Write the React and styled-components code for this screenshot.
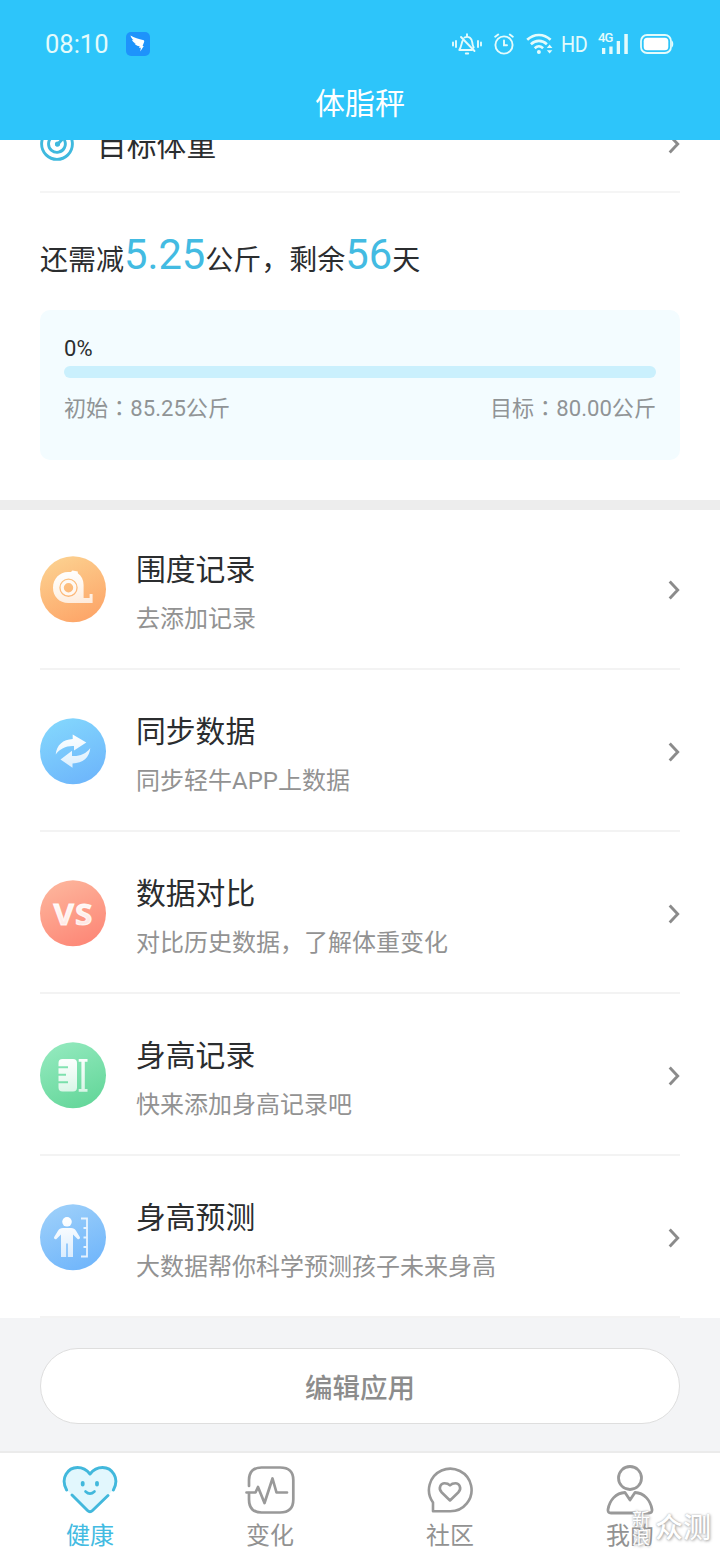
import React from 'react'
import styled, { createGlobalStyle } from 'styled-components'

const GlobalStyle = createGlobalStyle`
    *{
        box-sizing: border-box;
    }
    body{
        margin: 0;
        background: #ffffff;
        font-family: Roboto, 'Noto Sans CJK SC', sans-serif;
        color: #2b2d2f;
    }
    svg{
        display: block;
        flex-shrink: 0;
    }
`;

const entries = [
    { id: 'girth', title: '围度记录', text: '去添加记录', icon: GirthIcon },
    { id: 'sync', title: '同步数据', text: '同步轻牛APP上数据', icon: SyncIcon },
    { id: 'compare', title: '数据对比', text: '对比历史数据，了解体重变化', icon: CompareIcon },
    { id: 'height', title: '身高记录', text: '快来添加身高记录吧', icon: HeightIcon },
    { id: 'predict', title: '身高预测', text: '大数据帮你科学预测孩子未来身高', icon: PredictIcon },
]

const tabs = [
    { label: '健康', icon: HealthIcon, active: true },
    { label: '变化', icon: TrendIcon },
    { label: '社区', icon: CommunityIcon },
    { label: '我的', icon: MineIcon },
]

//status bar icons
function AppBadge() {
    return (
        <svg width="24" height="24" viewBox="0 0 24 24">
            <rect width="24" height="24" rx="5" fill="#1e93fb" />
            <path d="M4.500 3.500C8 5.800 13 7.200 17 8c1.200.3 1.500 1 1.100 2.100L16.600 14h1.200l-3.500 5.500.5-3.700h-1.900l.8-1.500c-2.600-.2-4.300-1.200-5.200-2.700l1.700.2C8 10.900 6.500 9.400 6 7.800l1.700.5C6 7 4.800 5.400 4.500 3.500Z" fill="#fff" />
        </svg>
    )
}

function MuteIcon() {
    return (
        <svg width="30" height="22" viewBox="0 0 30 22" fill="none" stroke="#e4fbfb" strokeWidth="1.900" strokeLinecap="round" strokeLinejoin="round">
            <path d="M1 9.500v3M4 8v6M26 8v6M29 9.500v3M15 1.200v1.500M10.500 8C9.500 10 9.500 13.500 7.300 17H20M12.500 4.500C17 2.500 20 5.500 20.300 9.500c.1 2 .5 3.500 1.400 5M9 4 22.500 18M13.800 20.500h2.400" />
        </svg>
    )
}

function AlarmIcon() {
    return (
        <svg width="20" height="22" viewBox="0 0 20 22" fill="none" stroke="#e4fbfb" strokeWidth="1.900" strokeLinecap="round">
            <circle cx="10" cy="12" r="8.600" />
            <path d="M10 7.500V12.300H13M1.200 3.700 4.200 1.500M18.800 3.700 15.800 1.500" />
        </svg>
    )
}

function WifiIcon() {
    return (
        <svg width="27" height="22" viewBox="0 0 27 22" fill="none" stroke="#e4fbfb" strokeWidth="2.600">
            <path d="M1.200 6.800C8 .3 17.800.3 24.600 6.800M4.900 11.200c4.700-4.400 11.300-4.400 16 0M8.700 15.200c2.600-2.400 5.800-2.400 8.400 0" />
            <circle cx="12.900" cy="19" r="2" fill="#e4fbfb" stroke="none" />
            <path d="m20.800 15 2.800-3.400 2.800 3.400ZM20.800 17.200l2.800 3.400 2.800-3.400Z" fill="#e4fbfb" stroke="none" />
        </svg>
    )
}

function SignalBars() {
    return (
        <svg width="26" height="20" viewBox="0 0 26 20" fill="#e4fbfb">
            <path d="M0 14h3.300v6H0zM7.300 12.500h3.300V20H7.300zM14.700 7H18v13h-3.300zM22.300 0h3.500v20h-3.500z" />
        </svg>
    )
}

function BatteryIcon() {
    return (
        <svg width="34" height="20" viewBox="0 0 34 20">
            <rect x="1" y="1" width="30" height="18" rx="6" fill="none" stroke="#e4fbfb" strokeWidth="1.800" />
            <rect x="3.700" y="3.700" width="24.600" height="12.600" rx="3.500" fill="#fff" />
            <path d="M32 6.500c1.700 1.500 1.700 5.500 0 7Z" fill="#e4fbfb" />
        </svg>
    )
}

function TargetIcon() {
    return (
        <svg width="34" height="34" viewBox="0 0 34 34" fill="none" stroke="#3fb9de" strokeLinecap="round">
            <circle cx="17" cy="17" r="15.400" strokeWidth="2.900" />
            <path d="M24.600 13.500a8.400 8.400 0 1 1-5.600-4.700" strokeWidth="2.900" />
            <path d="M17 18 23 11.500" strokeWidth="3" />
            <circle cx="17.500" cy="17" r="1.400" strokeWidth="2.400" />
        </svg>
    )
}

function Chevron() {
    return (
        <svg width="12" height="20" viewBox="0 0 12 20" fill="none" stroke="#8b8b8b" strokeWidth="2.900">
            <path d="m1.700 1.600 8 8.400-8 8.400" />
        </svg>
    )
}

//round icons of the list
function Disc({ id, from, to, children }) {
    return (
        <svg width="66" height="67" viewBox="0 0 66 67">
            <defs>
                <linearGradient id={`${id}-bg`} x1=".3" y1="0" x2=".75" y2="1">
                    <stop stopColor={from} />
                    <stop offset="1" stopColor={to} />
                </linearGradient>
                <linearGradient id={`${id}-fg`} gradientUnits="userSpaceOnUse" x1="30" y1="14" x2="34" y2="52">
                    <stop stopColor="#fff" />
                    <stop offset="1" stopColor="#fff" stopOpacity=".72" />
                </linearGradient>
            </defs>
            <circle cx="33" cy="33.300" r="33" fill={`url(#${id}-bg)`} />
            {children}
        </svg>
    )
}

function GirthIcon() {
    return (
        <Disc id="girth" from="#fcd08f" to="#fda467">
            <path fillRule="evenodd" d="M28 16h3l1.400-1.600 5.400 1v1.900c3.800 2.500 5.800 6.700 5.800 11.800V42h6v-4h3v9H28.500C19 47 13 40.300 13 31.700S19.500 16 28 16ZM28.500 22.500a9.200 9.200 0 1 0 0 18.400 9.200 9.200 0 0 0 0-18.400Z" fill="url(#girth-fg)" />
            <circle cx="28.500" cy="31.700" r="6.300" fill="none" stroke="#fff" strokeOpacity=".9" strokeWidth="3.200" />
        </Disc>
    )
}

function SyncIcon() {
    return (
        <Disc id="sync" from="#83d6fd" to="#6db5fb">
            <path d="M15.700 36.500C16.500 27 23 21.500 32.700 21V16.500L46.300 24.500 34 32.500V28C26.500 27.500 20 30.500 15.700 36.500Z" fill="url(#sync-fg)" />
            <path d="M50.300 30C49.500 39.500 43 45 32.500 45.500v4.200L20.500 41.500 32 32.700V38C39.500 38.500 46 36 50.300 30Z" fill="url(#sync-fg)" />
        </Disc>
    )
}

function CompareIcon() {
    return (
        <Disc id="compare" from="#fdb49b" to="#fd8676">
            <text x="33.500" y="45" textAnchor="middle" textLength="40" lengthAdjust="spacingAndGlyphs" fontFamily="'Noto Sans', 'Open Sans', sans-serif" fontWeight="700" fontSize="29" letterSpacing="1" fill="url(#compare-fg)" stroke="url(#compare-fg)" strokeWidth=".9">VS</text>
        </Disc>
    )
}

function HeightIcon() {
    return (
        <Disc id="height" from="#92e9bd" to="#63d699">
            <path d="M22.500 17H33a4 4 0 0 1 4 4v24.500a4 4 0 0 1-4 4H22.500a4 4 0 0 1-4-4v-4.300H28v-2H18.500v-5.500H26v-2H18.500v-5.500H28v-2h-9.500V21a4 4 0 0 1 4-4Z" fill="url(#height-fg)" />
            <path d="M38.700 17h8.800v2.700h-2.700V47h2.700v2.700h-8.800V47h2.700V19.700h-2.700Z" fill="url(#height-fg)" />
        </Disc>
    )
}

function PredictIcon() {
    return (
        <Disc id="predict" from="#9ccffa" to="#6fb5fb">
            <circle cx="27" cy="17.800" r="4.800" fill="url(#predict-fg)" />
            <path d="M23 24h8c2.500 0 3.800 1 5 2.800l3.800 6.200c.9 1.600-1.200 3-2.500 1.700L33 30.500V53h-5.200V39.500h-1.600V53H21V30.500l-4.300 4.200c-1.300 1.300-3.400-.1-2.500-1.700l3.800-6.200C19.200 25 20.500 24 23 24Z" fill="url(#predict-fg)" />
            <path d="M41 14.500h6v38h-6M43.500 24H47M43.500 33.500H47M43.500 43H47" fill="none" stroke="#fff" strokeOpacity=".8" strokeWidth="1.800" />
        </Disc>
    )
}

//tab bar icons
function HealthIcon() {
    return (
        <svg width="56" height="48" viewBox="0 0 56 48" fill="none" stroke="#42b8dc" strokeWidth="2.900" strokeLinecap="round" strokeLinejoin="round">
            <path d="M5 24C-2 12 6 1.500 15.500 1.500c5 0 9 2 12.500 6.500C31.500 3.500 35.500 1.500 40.500 1.500 50 1.500 58 12 51 24L30 45q-2 2-4 0Z" fill="#e2f7fd" stroke="none" />
            <path d="M4.600 24C-2 12 6 1.500 15.500 1.500c5 0 9 2 12.500 6.500C31.500 3.500 35.500 1.500 40.500 1.500 50 1.500 58 12 51.400 24M10 29 25.500 44.500q2.500 2.500 5 0L46 29.500" />
            <path d="M20.700 16.800v1.800M35 16.800v1.800" strokeWidth="3.800" />
            <path d="M23.500 25.500q4.500 4.200 9 0" strokeWidth="2.600" />
        </svg>
    )
}

function TrendIcon() {
    return (
        <svg width="50" height="48" viewBox="0 0 50 48" fill="none" stroke="#999" strokeWidth="2.700" strokeLinecap="round" strokeLinejoin="round">
            <path d="M4 20V14Q4 1.500 16.500 1.500H35Q48.300 1.500 48.300 14V33.500Q48.300 46.500 35 46.500H16.500Q4 46.500 4 33.500V27" />
            <path d="M1.500 26.500H10.500L13 21 19.500 37 27.500 12.500 31.500 26.500H42" />
        </svg>
    )
}

function CommunityIcon() {
    return (
        <svg width="46" height="46" viewBox="0 0 46 46" fill="none" stroke="#999" strokeWidth="2.600" strokeLinejoin="round">
            <path d="M6 44.300V35.500A21.300 21.300 0 1 1 23.300 44.300Z" />
            <path d="M23 33.500 14.800 25.500C10.500 21 14 16.300 17.500 16.300c2.300 0 4.200.7 5.500 2 1.300-1.300 3.200-2 5.500-2 3.500 0 7 4.700 2.700 9.200Z" />
        </svg>
    )
}

function MineIcon() {
    return (
        <svg width="48" height="50" viewBox="0 0 48 50" fill="none" stroke="#999" strokeWidth="2.800" strokeLinecap="round" strokeLinejoin="round">
            <circle cx="24" cy="13" r="11.500" />
            <path d="M28.500 48H5Q1.500 48 2 44.500C3.500 35 10 28 19 27.500L24 35 29 27.500C38 28 44.500 35 46 44.500Q46.500 48 43 48H36" />
        </svg>
    )
}

function Header() {
    return (
        <HeaderStyled>
            <StatusBar>
                <Clock>08:10</Clock>
                <AppBadge />
                <StatusIcons>
                    <MuteIcon />
                    <AlarmIcon />
                    <WifiIcon />
                    <Hd>HD</Hd>
                    <Signal>
                        <SignalBars />
                        <Network>4G</Network>
                    </Signal>
                    <BatteryIcon />
                </StatusIcons>
            </StatusBar>
            <PageTitle>体脂秤</PageTitle>
        </HeaderStyled>
    )
}

function Goal({ progress }) {
    return (
        <GoalStyled>
            <GoalRow>
                <TargetIcon />
                <GoalName>目标体重</GoalName>
                <Chevron />
            </GoalRow>
            <Summary>还需减<b>5.25</b>公斤，剩余<b>56</b>天</Summary>
            <ProgressCard>
                <Percent>{progress}%</Percent>
                <Track>
                    <Fill style={{ width: `${progress}%` }} />
                </Track>
                <Range>
                    <span>初始<i>：</i>85.25公斤</span>
                    <span>目标<i>：</i>80.00公斤</span>
                </Range>
            </ProgressCard>
        </GoalStyled>
    )
}

function App() {
    return (
        <Screen>
            <GlobalStyle />
            <Header />
            <Content>
                <Goal progress={0} />
                <List>
                    {entries.map(({ id, title, text, icon: Icon }) => (
                        <Row key={id}>
                            <Icon />
                            <div className="row-text">
                                <h3>{title}</h3>
                                <p>{text}</p>
                            </div>
                            <Chevron />
                        </Row>
                    ))}
                </List>
                <EditArea>
                    <EditButton type="button">编辑应用</EditButton>
                </EditArea>
            </Content>
            <TabBar>
                {tabs.map(({ label, icon: Icon, active }) => (
                    <Tab key={label} $active={active}>
                        <div className="tab-icon">
                            <Icon />
                        </div>
                        <span>{label}</span>
                    </Tab>
                ))}
                <Watermark>
                    <small>新浪</small>
                    <span>众测</span>
                </Watermark>
            </TabBar>
        </Screen>
    )
}

const Screen = styled.div`
    width: 720px;
    height: 1560px;
    display: flex;
    flex-direction: column;
    overflow: hidden;
`;

const HeaderStyled = styled.header`
    height: 140px;
    flex-shrink: 0;
    background: #2dc5fa;
    color: #ffffff;
`;

const StatusBar = styled.div`
    height: 72px;
    padding: 16px 46px 0 45px;
    display: flex;
    align-items: center;
`;

const Clock = styled.span`
    width: 81px;
    font-size: 25.5px;
    line-height: 30px;
    color: #e4fbfb;
`;

const StatusIcons = styled.div`
    margin-left: auto;
    display: flex;
    align-items: center;
    svg + svg{
        margin-left: 12px;
    }
`;

const Hd = styled.span`
    width: 27px;
    margin-left: 8px;
    font-size: 22.5px;
    letter-spacing: -0.5px;
    transform: scaleX(0.88);
    transform-origin: left center;
    color: #e4fbfb;
`;

const Signal = styled.div`
    position: relative;
    margin: 0 12px 0 14px;
`;

const Network = styled.span`
    position: absolute;
    left: -4px;
    top: -3px;
    font-size: 13px;
    font-weight: 500;
    line-height: 14px;
    letter-spacing: -1px;
    color: #e4fbfb;
`;

const PageTitle = styled.h1`
    margin: 10px 0 0;
    font-size: 30px;
    font-weight: 400;
    line-height: 44px;
    text-align: center;
`;

const Content = styled.main`
    height: 1311px;
    flex-shrink: 0;
    overflow: hidden;
`;

/* the page is scrolled: the first row is half under the header */
const GoalStyled = styled.section`
    height: 414px;
    margin-top: -44px;
    padding: 0 40px;
    border-bottom: 10px solid #ededed;
`;

const GoalRow = styled.div`
    height: 97px;
    display: flex;
    align-items: center;
    border-bottom: 2px solid #f5f5f5;
`;

const GoalName = styled.span`
    flex: 1;
    margin-left: 23px;
    padding-top: 4px;
    font-size: 29.8px;
    line-height: 44px;
`;

const Summary = styled.p`
    margin: 38px 0 0;
    height: 79px;
    font-size: 28px;
    line-height: 50px;
    white-space: nowrap;
    b{
        position: relative;
        top: -1px;
        font-size: 41.7px;
        font-weight: 400;
        line-height: 50px;
        color: #43bbe2;
    }
`;

const ProgressCard = styled.div`
    height: 150px;
    padding: 25px 24px 0;
    border-radius: 10px;
    background: #f3fcff;
`;

const Percent = styled.div`
    font-size: 22px;
    line-height: 28px;
`;

const Track = styled.div`
    height: 12px;
    margin-top: 3px;
    border-radius: 6px;
    background: #caf0fd;
    overflow: hidden;
`;

const Fill = styled.div`
    height: 100%;
    background: #2dc5fa;
`;

const Range = styled.div`
    margin-top: 14px;
    display: flex;
    justify-content: space-between;
    font-size: 22.1px;
    line-height: 32px;
    color: #909496;
    i{
        font-family: 'Noto Sans CJK TC', sans-serif;
        font-style: normal;
        line-height: 1;
    }
`;

const List = styled.section`
    padding: 0 40px;
`;

const Row = styled.div`
    height: 162px;
    padding-top: 3px;
    display: flex;
    align-items: center;
    border-bottom: 2px solid #f3f3f3;
    &:first-child{
        height: 160px;
        padding-top: 1px;
    }
    .row-text{
        flex: 1;
        margin-left: 30px;
        padding-top: 6px;
    }
    h3{
        margin: 0;
        font-size: 29.8px;
        font-weight: 400;
        line-height: 44px;
    }
    p{
        margin: 9px 0 0;
        font-size: 24px;
        line-height: 36px;
        color: #929292;
    }
`;

const EditArea = styled.div`
    height: 133px;
    padding: 30px 40px 0;
    background: #f3f4f6;
`;

const EditButton = styled.button`
    width: 100%;
    height: 76px;
    border: 1px solid #dedede;
    border-radius: 38px;
    background: #ffffff;
    font-family: inherit;
    font-size: 27.5px;
    font-weight: 500;
    color: #8c8c8c;
`;

const TabBar = styled.nav`
    position: relative;
    height: 109px;
    display: grid;
    grid-template-columns: repeat(4, 1fr);
    border-top: 2px solid #ebebeb;
`;

const Tab = styled.div`
    display: flex;
    flex-direction: column;
    align-items: center;
    font-size: 24px;
    line-height: 34px;
    color: ${props => props.$active ? '#43bbe2' : '#929292'};
    .tab-icon{
        height: 66px;
        padding-top: 8px;
        display: flex;
        align-items: center;
    }
`;

const Watermark = styled.div`
    position: absolute;
    right: 9px;
    bottom: 9px;
    display: flex;
    align-items: center;
    color: #ffffff;
    text-shadow: 0 0 2px #aaa, 1px 1px 3px #aaa;
    small{
        width: 18px;
        margin-right: 5px;
        font-size: 18px;
        line-height: 18px;
        word-break: break-all;
    }
    span{
        font-size: 28px;
        font-weight: 500;
        line-height: 44px;
    }
`;

export default App
